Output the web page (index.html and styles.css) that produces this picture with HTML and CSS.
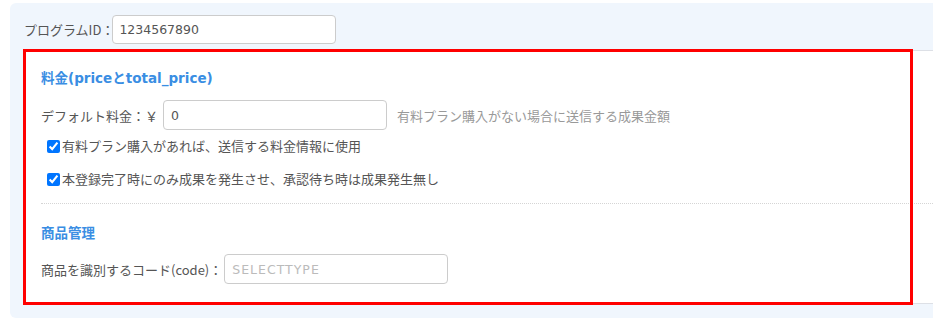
FILE: index.html
```html
<!DOCTYPE html>
<html lang="ja">
<head>
    <meta charset="UTF-8" />
    <title>プログラム設定</title>
    <link rel="stylesheet" href="styles.css">
</head>
<body>
    <div class="panel">
        <div class="id-row">
            <label for="programId">プログラムID：</label>
            <input type="text" id="programId" class="field field-id" value="1234567890" />
        </div>

        <div class="card">
            <h2>料金(priceとtotal_price)</h2>
            <div class="form-row">
                <label for="defaultPrice">デフォルト料金：￥</label>
                <input type="text" id="defaultPrice" class="field" value="0" />
                <span class="hint">有料プラン購入がない場合に送信する成果金額</span>
            </div>
            <label class="check check-first">
                <input type="checkbox" checked />有料プラン購入があれば、送信する料金情報に使用
            </label>
            <label class="check check-second">
                <input type="checkbox" checked />本登録完了時にのみ成果を発生させ、承認待ち時は成果発生無し
            </label>

            <div class="divider"></div>

            <h2 class="heading-goods">商品管理</h2>
            <div class="form-row form-row-code">
                <label for="code">商品を識別するコード(code)：</label>
                <input type="text" id="code" class="field" placeholder="SELECTTYPE" />
            </div>

            <!-- annotation frame drawn over the card -->
            <div class="highlight"></div>
        </div>
    </div>
</body>
</html>
```

FILE: styles.css
```css
/* General Reset */
* {
    box-sizing: border-box;
    margin: 0;
    padding: 0;
}
body {
    font-family: 'Noto Sans CJK JP', 'Noto Sans', sans-serif;
    font-size: 13px;
    color: #555;
    background: #fff;
    overflow: hidden;
}
.panel {
    margin: 3px 0 0 10px;
    height: 315px;
    background-color: #f0f6fd;
    border-radius: 6px 0 0 6px;
    padding-top: 12px;
}
.id-row {
    display: flex;
    align-items: center;
    padding-left: 14px;
    height: 29px;
}
.id-row label {
    margin-right: -2px;
}
.field {
    width: 224px;
    height: 30px;
    padding: 0 7px;
    border: 1px solid #ccc;
    border-radius: 4px;
    font-family: 'DejaVu Sans', 'Noto Sans CJK JP', sans-serif;
    font-size: 12.5px;
    color: #555;
    background: #fff;
    outline: none;
}
.field-id {
    height: 29px;
    padding: 0 6px;
}
.field::placeholder {
    color: #bbb;
    letter-spacing: 1px;
}
.card {
    position: relative;
    margin: 6px 0 0 13px;
    background: #fff;
    border-top: 1px solid #dde0e6;
    border-bottom: 1px solid #dde0e6;
    padding: 17px 0 19px 18px;
}
h2 {
    font-family: 'DejaVu Sans', 'Noto Sans CJK JP', sans-serif;
    font-size: 13.5px;
    font-weight: 700;
    line-height: 20px;
    color: #3a8ee3;
}
.form-row {
    display: flex;
    align-items: center;
    margin-top: 12px;
}
.form-row label {
    margin-right: 5px;
}
.form-row-code label {
    margin-right: 2px;
}
.hint {
    margin-left: 10px;
    color: #999;
}
.check {
    display: flex;
    align-items: center;
    line-height: 20px;
}
.check input {
    width: 13px;
    height: 13px;
    margin: 0 2px 0 6px;
    accent-color: #0075ff;
}
.check-first {
    margin-top: 6px;
}
.check-second {
    margin-top: 13px;
}
.divider {
    margin-top: 14px;
    border-top: 1px dotted #d5d5d5;
}
.heading-goods {
    margin-top: 19px;
}
.heading-goods + .form-row {
    margin-top: 11px;
}
.highlight {
    position: absolute;
    left: 0;
    top: -2px;
    width: 890px;
    bottom: -2px;
    border: 3px solid #ff0000;
    pointer-events: none;
}
```
